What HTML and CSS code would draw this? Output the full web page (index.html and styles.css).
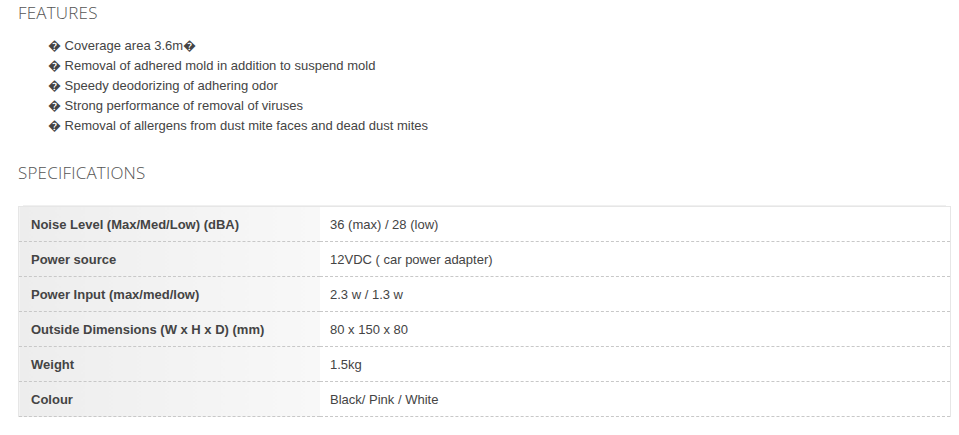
FILE: index.html
```html
<!DOCTYPE html>
<html>
<head>
<meta charset="utf-8">
<link rel="stylesheet" href="styles.css">
</head>
<body>
<div class="page">
  <h2 class="heading">FEATURES</h2>
  <ul class="features">
    <li>� Coverage area 3.6m�</li>
    <li>� Removal of adhered mold in addition to suspend mold</li>
    <li>� Speedy deodorizing of adhering odor</li>
    <li>� Strong performance of removal of viruses</li>
    <li>� Removal of allergens from dust mite faces and dead dust mites</li>
  </ul>
  <h2 class="heading heading-spec">SPECIFICATIONS</h2>
  <table class="spec">
    <tr><th>Noise Level (Max/Med/Low) (dBA)</th><td>36 (max) / 28 (low)</td></tr>
    <tr><th>Power source</th><td>12VDC ( car power adapter)</td></tr>
    <tr><th>Power Input (max/med/low)</th><td>2.3 w / 1.3 w</td></tr>
    <tr><th>Outside Dimensions (W x H x D) (mm)</th><td>80 x 150 x 80</td></tr>
    <tr><th>Weight</th><td>1.5kg</td></tr>
    <tr><th>Colour</th><td>Black/ Pink / White</td></tr>
  </table>
</div>
</body>
</html>
```
FILE: styles.css
```css
html, body {
  margin: 0;
  padding: 0;
  background: #fff;
}
.page {
  padding: 0 8px 0 18px;
  font-family: "Liberation Sans", Arial, sans-serif;
  color: #444;
}
.heading {
  margin: 0;
  padding-top: 3px;
  font-family: "Open Sans", sans-serif;
  font-weight: 300;
  font-size: 17px;
  line-height: 20px;
  color: #555;
  letter-spacing: 0.2px;
}
.features {
  list-style: none;
  margin: 13px 0 0;
  padding: 0 0 0 30px;
  font-size: 13px;
  line-height: 20px;
}
.heading-spec {
  margin-top: 24px;
}
.spec {
  margin-top: 23px;
  width: 100%;
  border-collapse: collapse;
  border: 1px solid #e6e6e6;
  border-bottom: none;
  box-shadow: 0 -6px 0 -5px #f0f0f0;
  font-size: 13px;
}
.spec tr {
  height: 35px;
  border-bottom: 1px dashed #c8c8c8;
}
.spec th {
  width: 277px;
  padding: 0 12px;
  text-align: left;
  font-weight: bold;
  color: #444;
  background: linear-gradient(to right, #ededed, #f8f8f8);
}
.spec td {
  padding: 0 10px;
  color: #444;
}
```
